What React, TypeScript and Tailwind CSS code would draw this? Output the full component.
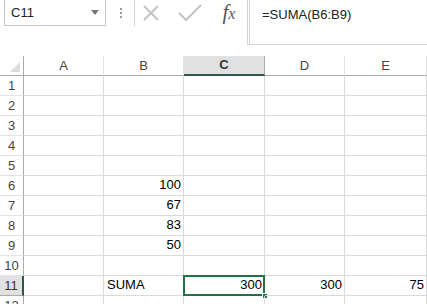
const columns = ["A", "B", "C", "D", "E"];
const colWidths = ["w-[80px]", "w-[80px]", "w-[81px]", "w-[80px]", "w-[82px]"];

const values: Record<number, Record<string, string>> = {
  6: { B: "100" },
  7: { B: "67" },
  8: { B: "83" },
  9: { B: "50" },
  11: { B: "SUMA", C: "300", D: "300", E: "75" },
};

const rows = Array.from({ length: 12 }, (_, i) => i + 1);

function FormulaBar() {
  return (
    <div className="flex h-[56px] items-start">
      <div className="ml-[4px] flex h-[26px] w-[102px] items-center justify-between border border-t-0 border-[#c6c6c6] pl-[6px] pr-[6px] text-[13px] text-[#222]">
        <span className="pt-[1px]">C11</span>
        <svg width="8" height="5" viewBox="0 0 8 5">
          <path d="M0 0 L8 0 L4 5 Z" fill="#777" />
        </svg>
      </div>

      <div className="ml-[14px] flex h-[26px] flex-col items-center justify-center gap-[2px]">
        <span className="h-[2px] w-[2px] bg-[#9a9a9a]" />
        <span className="h-[2px] w-[2px] bg-[#9a9a9a]" />
        <span className="h-[2px] w-[2px] bg-[#9a9a9a]" />
      </div>

      <div className="ml-[12px] flex h-[26px] items-center border-l border-[#d4d4d4]">
        <svg width="38" height="26" viewBox="0 0 38 26">
          <path d="M9 6 L23 20 M23 6 L9 20" stroke="#c4c4c4" strokeWidth="2" fill="none" />
        </svg>
        <svg width="38" height="26" viewBox="0 0 38 26">
          <path d="M6 13 L13 20 L28 5" stroke="#c4c4c4" strokeWidth="2.2" fill="none" />
        </svg>
        <div className="flex w-[36px] items-baseline justify-center font-['Liberation_Serif',serif] italic text-[#555]">
          <span className="text-[21px]">f</span>
          <span className="text-[16px]">x</span>
        </div>
      </div>

      <div className="h-[45px] flex-1 border-b border-l-[3px] border-double border-t-0 border-r-0 border-[#d4d4d4] pl-[12px] pt-[5px] text-[13px] text-[#222]">
        =SUMA(B6:B9)
      </div>
    </div>
  );
}

function HeaderRow() {
  return (
    <div className="flex h-[20px]">
      <div className="relative w-[24px] shrink-0 border-b border-r border-[#ababab]">
        <svg className="absolute bottom-[3px] right-[3px]" width="10" height="10" viewBox="0 0 10 10">
          <path d="M10 0 L10 10 L0 10 Z" fill="#dcdcdc" />
        </svg>
      </div>
      {columns.map((c, i) => {
        const selected = c === "C";
        return (
          <div
            key={c}
            className={`${colWidths[i]} flex shrink-0 items-center justify-center border-r text-[13px] ${
              selected
                ? "border-b-2 border-b-[#2a5a46] border-r-[#ababab] bg-[#e1e1e1] font-bold text-[#333]"
                : "border-b border-b-[#ababab] border-r-[#e3e3e3] text-[#444]"
            }`}
          >
            {c}
          </div>
        );
      })}
    </div>
  );
}

function Row({ n }: { n: number }) {
  const selected = n === 11;
  return (
    <div className="flex h-[20px]">
      <div
        className={`flex w-[24px] shrink-0 items-center justify-center border-b text-[13px] ${
          selected
            ? "border-r-2 border-r-[#2a5a46] border-b-[#ababab] bg-[#e1e1e1] text-[#333]"
            : "border-r border-r-[#ababab] border-b-[#e3e3e3] text-[#444]"
        }`}
      >
        {n}
      </div>
      {columns.map((c, i) => {
        const v = values[n]?.[c];
        const isText = v !== undefined && isNaN(Number(v));
        const active = selected && c === "C";
        return (
          <div
            key={c}
            className={`${colWidths[i]} relative flex shrink-0 items-end border-b border-r border-[#dadada] pb-[2px] text-[13px] leading-[16px] text-black ${
              isText ? "justify-start pl-[3px]" : "justify-end pr-[2px]"
            }`}
          >
            {active && (
              <>
                <div className="absolute -left-px -top-px bottom-[-1px] right-[-1px] border-2 border-[#217346]" />
                <div className="absolute bottom-[-4px] right-[-4px] h-[6px] w-[6px] border border-white bg-[#217346]" />
              </>
            )}
            <span className="relative">{v}</span>
          </div>
        );
      })}
    </div>
  );
}

export default function App() {
  return (
    <div className="h-[304px] w-[427px] overflow-hidden bg-white font-['Liberation_Sans',Arial,sans-serif]">
      <FormulaBar />
      <HeaderRow />
      {rows.map((n) => (
        <Row key={n} n={n} />
      ))}
    </div>
  );
}
